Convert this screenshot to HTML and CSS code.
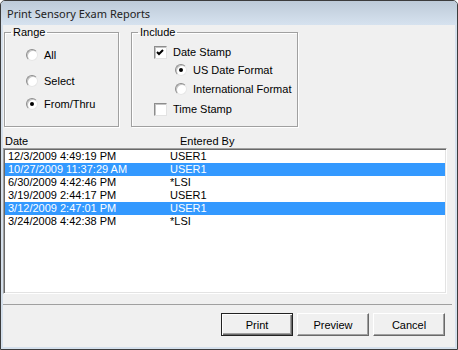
FILE: index.html
```html
<!DOCTYPE html>
<html lang="en">
<head>
    <meta charset="UTF-8">
    <meta name="viewport" content="width=device-width, initial-scale=1.0">
    <title>Print Sensory Exam Reports</title>
    <link rel="stylesheet" href="styles.css">
</head>
<body>
    <div class="window">
        <div class="titlebar">Print Sensory Exam Reports</div>
        <div class="client">
            <div class="groups">
                <fieldset class="group group-range">
                    <legend>Range</legend>
                    <label class="option opt-all"><span class="radio"></span>All</label>
                    <label class="option opt-select"><span class="radio"></span>Select</label>
                    <label class="option opt-from"><span class="radio checked"></span>From/Thru</label>
                </fieldset>
                <fieldset class="group group-include">
                    <legend>Include</legend>
                    <label class="option opt-date">
                        <span class="check">
                            <svg width="9" height="9" viewBox="0 0 9 9"><polyline points="1,4 3,6 7,2" fill="none" stroke="#000" stroke-width="2"/></svg>
                        </span>Date Stamp
                    </label>
                    <label class="option sub opt-us"><span class="radio checked"></span>US Date Format</label>
                    <label class="option sub opt-intl"><span class="radio"></span>International Format</label>
                    <label class="option opt-time"><span class="check"></span>Time Stamp</label>
                </fieldset>
            </div>

            <div class="list-head">
                <span class="head-date">Date</span>
                <span>Entered By</span>
            </div>
            <div class="list">
                <div class="row"><span>12/3/2009 4:49:19 PM</span><span>USER1</span></div>
                <div class="row selected"><span>10/27/2009 11:37:29 AM</span><span>USER1</span></div>
                <div class="row"><span>6/30/2009 4:42:46 PM</span><span>*LSI</span></div>
                <div class="row"><span>3/19/2009 2:44:17 PM</span><span>USER1</span></div>
                <div class="row selected"><span>3/12/2009 2:47:01 PM</span><span>USER1</span></div>
                <div class="row"><span>3/24/2008 4:42:38 PM</span><span>*LSI</span></div>
            </div>

            <div class="separator"></div>

            <div class="buttons">
                <button type="button" class="default">Print</button>
                <button type="button">Preview</button>
                <button type="button">Cancel</button>
            </div>
        </div>
    </div>
</body>
</html>
```

FILE: styles.css
```css
body {
    margin: 0;
    font-family: "Liberation Sans", Arial, sans-serif;
    font-size: 11px;
    color: #000;
}
.window {
    width: 458px;
    height: 350px;
    box-sizing: border-box;
    border: 1px solid #3c3c3c;
    border-radius: 5px 5px 0 0;
    background: #d5e0ec;
    display: flex;
    flex-direction: column;
}
.titlebar {
    height: 24px;
    box-sizing: border-box;
    padding: 1px 0 0 6px;
    line-height: 23px;
    font-family: "Noto Sans", "Liberation Sans", sans-serif;
    font-size: 11px;
    color: #222;
    background: linear-gradient(#bdcad8, #d6e2ef);
    border-radius: 4px 4px 0 0;
}
.client {
    flex: 1;
    margin: 0 2px 2px 2px;
    background: #f0f0f0;
}

/* group boxes */
.groups {
    display: flex;
    gap: 12px;
    padding: 1px 0 0 1px;
}
.group {
    margin: 0;
    padding: 0;
    min-width: 0;
    height: 101px;
    box-sizing: border-box;
    border: 1px solid #a0a0a0;
    box-shadow: 1px 1px 0 #fff, inset 1px 1px 0 #fff;
}
.group-range {
    width: 115px;
}
.group-include {
    width: 167px;
}
legend {
    margin-left: 6px;
    padding: 0 2px;
    line-height: 13px;
}
.option {
    display: flex;
    align-items: center;
    height: 18px;
    white-space: nowrap;
}
.group-range .option {
    padding-left: 21px;
}
.group-include .option {
    padding-left: 22px;
}
.group-include .option.sub {
    padding-left: 43px;
}
.opt-all { margin-top: 7px; }
.opt-select { margin-top: 8px; }
.opt-from { margin-top: 5px; }
.opt-date { margin-top: 4px; }
.opt-intl { margin-top: 1px; }
.opt-time { margin-top: 2px; }

.radio {
    position: relative;
    width: 12px;
    height: 12px;
    box-sizing: border-box;
    margin-right: 6px;
    border-radius: 50%;
    border: 1px solid;
    border-color: #8d8d8d #e6e6e6 #e6e6e6 #8d8d8d;
    background: #fff;
    box-shadow: inset 1px 1px 0 #c4c4c4;
}
.radio.checked::after {
    content: "";
    position: absolute;
    left: 3px;
    top: 3px;
    width: 4px;
    height: 4px;
    border-radius: 50%;
    background: #000;
}
.check {
    display: flex;
    align-items: center;
    justify-content: center;
    width: 13px;
    height: 13px;
    box-sizing: border-box;
    margin-right: 6px;
    border: 1px solid;
    border-color: #8d8d8d #e3e3e3 #e3e3e3 #8d8d8d;
    background: #fff;
    box-shadow: inset 1px 1px 0 #c4c4c4;
}

/* list */
.list-head {
    display: flex;
    margin-top: 7px;
    height: 14px;
    line-height: 14px;
    padding-left: 2px;
}
.head-date {
    width: 175px;
}
.list {
    width: 444px;
    height: 146px;
    box-sizing: border-box;
    padding: 1px;
    border: 1px solid;
    border-color: #a0a0a0 #fff #fff #a0a0a0;
    background: #fff;
    box-shadow: inset 1px 1px 0 #696969, inset -1px -1px 0 #e3e3e3;
}
.row {
    display: grid;
    grid-template-columns: 162px 1fr;
    height: 13px;
    line-height: 13px;
    padding-left: 3px;
    white-space: nowrap;
}
.row.selected {
    background: #3399ff;
    color: #fff;
}

.separator {
    height: 1px;
    margin: 10px 3px 0 0;
    background: #a0a0a0;
}

/* buttons */
.buttons {
    display: flex;
    justify-content: flex-end;
    gap: 4px;
    margin-top: 8px;
    padding-right: 10px;
}
button {
    width: 72px;
    height: 23px;
    padding: 0;
    font-family: inherit;
    font-size: 11px;
    color: #000;
    background: #f0f0f0;
    border: 1px solid;
    border-color: #fff #696969 #696969 #fff;
    box-shadow: inset -1px -1px 0 #a0a0a0;
    border-radius: 0;
}
button.default {
    border-color: #222;
    box-shadow: inset 1px 1px 0 #fff, inset -1px -1px 0 #696969, inset -2px -2px 0 #a0a0a0;
}
```
